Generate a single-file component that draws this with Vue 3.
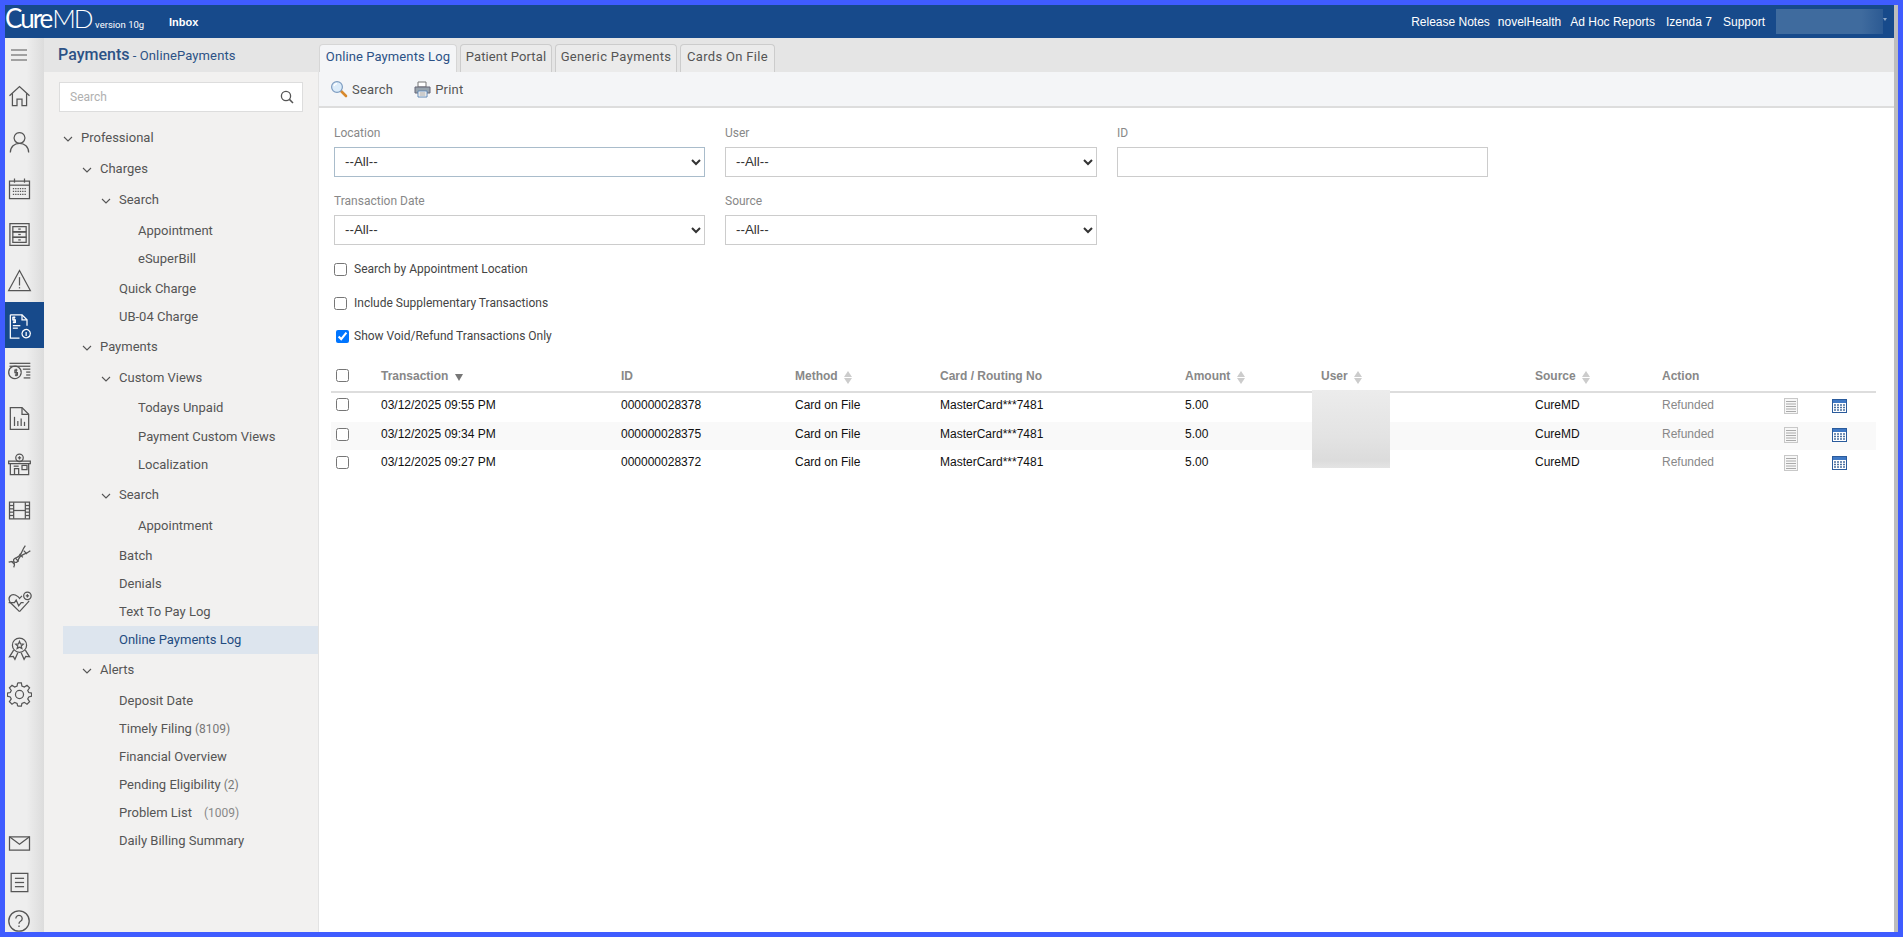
<script setup>
const railIcons = [
  { id: 'home', paths: ['M3 14 L15 3 L27 14', 'M6.500 11 V26 H12 V18 H18 V26 H23.500 V11'] },
  { id: 'user', paths: ['M15 3 a6.500 6.500 0 1 0 0.01 0', 'M4 27 c0 -7 5 -11 11 -11 s11 4 11 11'] },
  { id: 'calendar', paths: ['M3 6 H27 V27 H3 Z', 'M3 11 H27', 'M9 3 V8', 'M21 3 V8', 'M7 15 H23', 'M7 18.500 H23', 'M7 22 H23'], dashed: [4, 5, 6] },
  { id: 'cabinet', paths: ['M3.500 2 H26.500 V28 H3.500 Z', 'M7 5.500 H23 V11.500 H7 Z', 'M7 12 H23 V18 H7 Z', 'M7 18.500 H23 V24.500 H7 Z', 'M13.500 8.500 H16.500', 'M13.500 15 H16.500', 'M13.500 21.500 H16.500'] },
  { id: 'alert', paths: ['M15 3 L28 27 H2 Z', 'M15 11 V21', 'M15 23 V24.500'] },
  { id: 'billing', active: true, paths: ['M4 1 H18 L24 7 V14', 'M4 1 V29 H15', 'M18 1 V7 H24', 'M10 4 H7 V7 H10 V10 H7', 'M8.500 3 V11', 'M7 14 H16', 'M7 17 H13', 'M28 24 a5 5 0 1 0 -0.010 0.100', 'M23 21.500 V26.500'] },
  { id: 'money', paths: ['M3 4 H28', 'M3 7.500 H28', 'M19 11 H28', 'M23 14.500 H28', 'M23 18 H28', 'M20 21.500 H28', 'M17 15.500 a7.500 7.500 0 1 0 -0.010 0.100', 'M12.500 12 h-3 v3 h3 v3 h-3', 'M11 10.500 V19.500'] },
  { id: 'report', paths: ['M4 2 H18 L26 10 V28 H4 Z', 'M18 2 V10 H26', 'M9 24 V13', 'M13 24 V18', 'M17 24 V15', 'M21 24 V19'] },
  { id: 'clinic', paths: ['M2 11 H28 V14 H2 Z', 'M4 14 V27 H26 V14', 'M9 27 V20 H14 V27', 'M8 17 H14', 'M18 16 H24 V21 H18 Z', 'M19.500 7 a4.500 4.500 0 1 0 -9 0 a4.500 4.500 0 1 0 9 0', 'M15 5 V9', 'M13 7 H17'] },
  { id: 'film', paths: ['M3 5 H27 V25 H3 Z', 'M8 5 V25', 'M22 5 V25', 'M8 15 H22', 'M3 9 H8', 'M3 13 H8', 'M3 17 H8', 'M3 21 H8', 'M22 9 H27', 'M22 13 H27', 'M22 17 H27', 'M22 21 H27'] },
  { id: 'dna', paths: ['M2 22 C8 18 11 27 14 18 C16 12 20 14 28 8', 'M8 28 C12 22 3 19 12 16 C18 14 16 10 22 2', 'M5 20.500 L9 24.500', 'M10 17 L14 21', 'M15 12 L19 16', 'M20 8 L24 12'] },
  { id: 'heart', box: '0 1 30 30', paths: ['M15 27 L4 16 C0 10 5 5 10 7 C12 8 14 9 15 11 C16 10 17 9 18 8', 'M15 27 L24 17 C25 16 26 15 26.500 14', 'M2 16 H9 L11 13 L14 20 L17 16 H20', 'M29 8 a4.500 4.500 0 1 0 -9 0 a4.500 4.500 0 1 0 9 0', 'M24.500 6 V10', 'M22.500 8 H26.500'] },
  { id: 'award', paths: ['M23.500 11 a8.500 8.500 0 1 0 -17 0 a8.500 8.500 0 1 0 17 0', 'M15 6.500 L16.300 9.500 L19.500 9.800 L17 12 L17.800 15 L15 13.400 L12.200 15 L13 12 L10.500 9.800 L13.700 9.500 Z', 'M8 17 L3 25 L7.500 24.500 L9.500 28 L13 20', 'M22 17 L27 25 L22.500 24.500 L20.500 28 L17 20'] },
  { id: 'gear', box: '0 2 30 31', paths: ['M12.700 3 H17.300 L18 7 L21 8.300 L24.300 6 L27.500 9.200 L25.200 12.500 L26.500 15 L30 15.800 V19.500 L26.500 20.500 L25.200 23 L27.500 26.300 L24.300 29.500 L21 27.200 L18 28.500 L17.300 32 H12.700', 'M12.700 3 L12 7 L9 8.300 L5.700 6 L2.500 9.200 L4.800 12.500 L3.500 15 L0 15.800 V19.500 L3.500 20.500 L4.800 23 L2.500 26.300 L5.700 29.500 L9 27.200 L12 28.500 L12.700 32', 'M20 17.500 a5 5 0 1 0 -10 0 a5 5 0 1 0 10 0'] },
];
const bottomIcons = [
  { id: 'mail', paths: ['M3 7 H27 V23 H3 Z', 'M3 7 L15 16 L27 7'] },
  { id: 'list', paths: ['M5 4 H25 V26 H5 Z', 'M9.500 10 H20.500', 'M9.500 15 H20.500', 'M9.500 20 H20.500'] },
];
const tree = [
  { label: 'Professional', depth: 0, open: true, gap: 0 },
  { label: 'Charges', depth: 1, open: true, gap: 3 },
  { label: 'Search', depth: 2, open: true, gap: 3 },
  { label: 'Appointment', depth: 3, gap: 3 },
  { label: 'eSuperBill', depth: 3, gap: 0 },
  { label: 'Quick Charge', depth: 2, gap: 2 },
  { label: 'UB-04 Charge', depth: 2, gap: 0 },
  { label: 'Payments', depth: 1, open: true, gap: 2 },
  { label: 'Custom Views', depth: 2, open: true, gap: 3 },
  { label: 'Todays Unpaid', depth: 3, gap: 2 },
  { label: 'Payment Custom Views', depth: 3, gap: 1 },
  { label: 'Localization', depth: 3, gap: 0 },
  { label: 'Search', depth: 2, open: true, gap: 2 },
  { label: 'Appointment', depth: 3, gap: 3 },
  { label: 'Batch', depth: 2, gap: 2 },
  { label: 'Denials', depth: 2, gap: 0 },
  { label: 'Text To Pay Log', depth: 2, gap: 0 },
  { label: 'Online Payments Log', depth: 2, gap: 0, active: true },
  { label: 'Alerts', depth: 1, open: true, gap: 2 },
  { label: 'Deposit Date', depth: 2, gap: 3 },
  { label: 'Timely Filing', depth: 2, gap: 0, count: '(8109)' },
  { label: 'Financial Overview', depth: 2, gap: 0 },
  { label: 'Pending Eligibility', depth: 2, gap: 0, count: '(2)' },
  { label: 'Problem List', depth: 2, gap: 0, count: '(1009)', wide: true },
  { label: 'Daily Billing Summary', depth: 2, gap: 0 },
];
const topLinks = ['Release Notes', 'novelHealth', 'Ad Hoc Reports', 'Izenda 7', 'Support'];
const tabs = ['Online Payments Log', 'Patient Portal', 'Generic Payments', 'Cards On File'];
const columns = [
  { label: 'Transaction', sort: 'desc' },
  { label: 'ID' },
  { label: 'Method', sort: 'both' },
  { label: 'Card / Routing No', sort: 'none' },
  { label: 'Amount', sort: 'both' },
  { label: 'User', sort: 'both' },
  { label: 'Source', sort: 'both' },
  { label: 'Action' },
];
const rows = [
  { time: '03/12/2025 09:55 PM', id: '000000028378' },
  { time: '03/12/2025 09:34 PM', id: '000000028375' },
  { time: '03/12/2025 09:27 PM', id: '000000028372' },
];
</script>

<template>
  <div class="frame">
    <div class="main">
      <header class="topbar">
        <div class="logo">
          <span class="logo-cure">Cure</span><span class="logo-md">MD</span><span class="logo-ver">version 10g</span>
        </div>
        <a class="inbox">Inbox</a>
        <nav class="toplinks">
          <a v-for="l in topLinks" :key="l">{{ l }}</a>
        </nav>
        <div class="user-blur"></div>
        <span class="user-caret"></span>
      </header>

      <div class="body">
        <aside class="rail">
          <div class="rail-menu">
            <svg width="16" height="12" viewBox="0 0 16 12"><path d="M0 1 H16 M0 6 H16 M0 11 H16" stroke="#555" stroke-width="1.100" fill="none" /></svg>
          </div>
          <div v-for="ic in railIcons" :key="ic.id" class="rail-item" :class="{ on: ic.active }">
            <svg width="25" height="25" :viewBox="ic.box || '0 0 30 30'" fill="none" stroke-width="1.500">
              <path
                v-for="(d, i) in ic.paths"
                :key="i"
                :d="d"
                :stroke-dasharray="ic.dashed && ic.dashed.includes(i) ? '1.600 1.200' : null"
              />
            </svg>
          </div>
          <div class="rail-bottom">
            <div v-for="ic in bottomIcons" :key="ic.id" class="rail-small">
              <svg width="25" height="25" viewBox="0 0 30 30" fill="none" stroke-width="1.500">
                <path v-for="(d, i) in ic.paths" :key="i" :d="d" />
              </svg>
            </div>
            <div class="rail-help">
              <svg width="22" height="22" viewBox="0 0 22 22" fill="none" stroke-width="1.300">
                <circle cx="11" cy="11" r="10.200" />
                <path d="M7.800 8.500 a3.200 3.200 0 1 1 4.800 2.800 c-1 .6 -1.600 1.100 -1.600 2.400" />
                <path d="M11 15.500 V17" />
              </svg>
            </div>
          </div>
        </aside>

        <div class="workspace">
          <div class="heading-strip">
            <div class="page-title"><b>Payments</b> <span>- OnlinePayments</span></div>
            <div class="tabs">
              <div v-for="(t, i) in tabs" :key="t" class="tab" :class="{ active: i === 0 }">{{ t }}</div>
            </div>
          </div>

          <div class="columns">
            <aside class="tree-panel">
              <div class="tree-search">
                <input class="tree-input" type="text" placeholder="Search" />
                <svg width="14" height="14" viewBox="0 0 14 14" fill="none"><circle cx="6" cy="6" r="4.600" stroke="#555" stroke-width="1.300" /><path d="M9.400 9.400 L13 13" stroke="#555" stroke-width="1.500" /></svg>
              </div>
              <ul class="tree">
                <li
                  v-for="(n, i) in tree"
                  :key="i"
                  class="node"
                  :class="['d' + n.depth, 'g' + n.gap, { active: n.active }]"
                >
                  <svg v-if="n.open" class="chev" width="10" height="6" viewBox="0 0 10 6"><path d="M1 1 L5 5 L9 1" fill="none" stroke="#555" stroke-width="1.100" /></svg>
                  <span>{{ n.label }}</span>
                  <span v-if="n.count" class="count" :class="{ wide: n.wide }">{{ n.count }}</span>
                </li>
              </ul>
            </aside>

            <main class="content">
              <div class="toolbar">
                <a class="tool">
                  <svg width="18" height="18" viewBox="0 0 18 18">
                    <path d="M10.500 10.500 L16 16" stroke="#d8892c" stroke-width="2.600" stroke-linecap="round" />
                    <circle cx="7" cy="7" r="5.400" fill="#dcecfa" stroke="#7d9cc0" stroke-width="1.200" />
                    <path d="M4 6 a3.500 3.500 0 0 1 3 -2.500" stroke="#fff" stroke-width="1.300" fill="none" />
                  </svg>
                  Search
                </a>
                <a class="tool">
                  <svg width="17" height="17" viewBox="0 0 17 17">
                    <path d="M4 1 H12 V6 H4 Z" fill="#fff" stroke="#777" />
                    <path d="M1 6 H16 V12 H1 Z" fill="#97a3ad" stroke="#667" />
                    <path d="M4 10 H13 V16 H4 Z" fill="#fff" stroke="#5f86b3" />
                    <path d="M5.500 12 H11.500 M5.500 14 H11.500" stroke="#999" />
                  </svg>
                  Print
                </a>
              </div>

              <form class="filters" @submit.prevent>
                <div class="filter-grid">
                  <label class="field">
                    <span>Location</span>
                    <select class="control focus"><option>--All--</option></select>
                  </label>
                  <label class="field">
                    <span>User</span>
                    <select class="control"><option>--All--</option></select>
                  </label>
                  <label class="field">
                    <span>ID</span>
                    <input class="control" type="text" />
                  </label>
                  <label class="field">
                    <span>Transaction Date</span>
                    <select class="control"><option>--All--</option></select>
                  </label>
                  <label class="field">
                    <span>Source</span>
                    <select class="control"><option>--All--</option></select>
                  </label>
                </div>
                <label class="check first"><input type="checkbox" /> Search by Appointment Location</label>
                <label class="check"><input type="checkbox" /> Include Supplementary Transactions</label>
                <label class="check shifted"><input type="checkbox" checked /> Show Void/Refund Transactions Only</label>
              </form>

              <div class="table-wrap">
                <table class="grid">
                  <colgroup>
                    <col class="c-check" /><col class="c-tx" /><col class="c-id" /><col class="c-method" /><col class="c-card" /><col class="c-amount" /><col class="c-user" /><col class="c-source" /><col class="c-action" /><col class="c-note" /><col class="c-cal" />
                  </colgroup>
                  <thead>
                    <tr>
                      <th class="cell-check"><input type="checkbox" /></th>
                      <th v-for="c in columns" :key="c.label">
                        {{ c.label }}
                        <span v-if="c.sort === 'desc'" class="sort-desc"></span>
                        <span v-if="c.sort === 'both'" class="sort-both"></span>
                      </th>
                      <th></th>
                      <th></th>
                    </tr>
                  </thead>
                  <tbody>
                    <tr v-for="r in rows" :key="r.id">
                      <td class="cell-check"><input type="checkbox" /></td>
                      <td>{{ r.time }}</td>
                      <td>{{ r.id }}</td>
                      <td>Card on File</td>
                      <td>MasterCard***7481</td>
                      <td>5.00</td>
                      <td></td>
                      <td>CureMD</td>
                      <td class="muted">Refunded</td>
                      <td class="cell-icon">
                        <svg class="row-icon" width="14" height="16" viewBox="0 0 14 16">
                          <rect x=".5" y=".5" width="13" height="15" fill="#f7f7f7" stroke="#c8c8c8" />
                          <path d="M2 3.500 H12 M2 6 H12 M2 8.500 H12 M2 11 H12 M2 13.500 H12" stroke="#aaa" />
                        </svg>
                      </td>
                      <td class="cell-icon">
                        <svg class="row-icon" width="15" height="14" viewBox="0 0 15 14">
                          <rect x=".5" y=".5" width="14" height="13" fill="#fff" stroke="#2a5b9c" />
                          <rect x="1" y="1" width="13" height="3" fill="#3f78c4" />
                          <path d="M2 6 H13 M2 8.500 H13 M2 11 H13" stroke="#4a6f9f" stroke-dasharray="2 1" stroke-width="1.300" />
                        </svg>
                      </td>
                    </tr>
                  </tbody>
                </table>
                <div class="blur-user"></div>
              </div>
            </main>
          </div>
        </div>
      </div>
    </div>
    <div class="edge"></div>
  </div>
</template>

<style>
html, body { margin: 0; height: 100%; overflow: hidden; }
</style>

<style scoped>
* { box-sizing: border-box; }
.frame {
  width: 1903px; height: 937px; border: 5px solid #3f5cff; background: #fff;
  display: flex; overflow: hidden;
  font-family: "Liberation Sans", Arial, sans-serif; font-size: 12px; color: #111;
}
.main { flex: 1; min-width: 0; display: flex; flex-direction: column; }
.topbar {
  height: 33px; flex: none; background: #174a8b; color: #fff;
  display: flex; align-items: center; position: relative;
}
.logo { width: 164px; display: flex; align-items: baseline; font-family: Lato, "Open Sans", sans-serif; line-height: 31px; flex: none; white-space: nowrap; }
.logo-cure { font-size: 26px; font-weight: 400; letter-spacing: -2px; }
.logo-md { font-size: 26px; font-weight: 300; letter-spacing: -2.300px; margin-left: 1px; }
.logo-ver { font-family: Roboto, sans-serif; font-size: 9.500px; margin-left: 4px; }
.inbox { font-weight: 700; font-size: 11px; }
.toplinks { margin-left: auto; display: flex; gap: 8px; font-size: 12px; margin-right: 11px; white-space: nowrap; }
.toplinks a:nth-child(3) { margin-left: 1px; }
.toplinks a:nth-child(4), .toplinks a:nth-child(5) { margin-left: 3px; }
.user-blur { width: 107px; height: 25px; background: linear-gradient(90deg, #3f6b9e, #3f6b9e 80%, #2c5a93); flex: none; }
.user-caret { width: 4px; height: 3px; flex: none; border-left: 2px solid transparent; border-right: 2px solid transparent; border-top: 3px solid #8ea8c8; margin: -4px 7px 0 0; }

.body { flex: 1; min-height: 0; display: flex; }
.rail {
  width: 39px; flex: none; display: flex; flex-direction: column;
  background: linear-gradient(90deg, #eeeeee 55%, #dcdcdc);
}
.rail-menu { height: 34px; flex: none; display: flex; align-items: center; justify-content: center; padding-right: 11px; }
.rail-item { height: 46px; flex: none; display: flex; align-items: center; justify-content: center; padding: 2px 11px 0 0; }
.rail-item svg, .rail-small svg, .rail-help svg { stroke: #555; display: block; }
.rail-item.on { background: #174a8b; }
.rail-item.on svg { stroke: #fff; }
.rail-bottom { margin-top: auto; }
.rail-small { height: 39px; display: flex; align-items: center; justify-content: center; padding-right: 11px; }
.rail-help { height: 30px; padding: 8px 0 0 3px; }

.workspace { flex: 1; min-width: 0; display: flex; flex-direction: column; }
.heading-strip { height: 34px; flex: none; background: #e5e5e5; display: flex; }
.page-title { width: 275px; flex: none; padding: 7px 0 0 14px; font-family: Roboto, sans-serif; color: #2c5286; font-size: 13px; line-height: 20px; white-space: nowrap; }
.page-title b { font-size: 16px; font-weight: 500; }
.page-title span { letter-spacing: .12px; }
.tabs { display: flex; gap: 3px; align-items: flex-end; font-family: Roboto, sans-serif; font-size: 13px; color: #555; }
.tab { height: 28px; line-height: 24px; text-align: center; border: 1px solid #ccc; border-bottom: 0; border-radius: 4px 4px 0 0; background: #ebebeb; white-space: nowrap; letter-spacing: .1px; }
.tab:nth-child(1) { width: 138px; }
.tab:nth-child(2) { width: 92px; }
.tab:nth-child(3) { width: 122px; letter-spacing: .35px; }
.tab:nth-child(4) { width: 95px; letter-spacing: .33px; }
.tab.active { background: #f4f5f7; color: #2c5286; border-color: #d6d6d6; }

.columns { flex: 1; min-height: 0; display: flex; }
.tree-panel { width: 275px; flex: none; background: #f2f1f0; border-right: 1px solid #e3e3e3; padding: 10px 0 0 0; font-family: Roboto, sans-serif; font-size: 13px; color: #555; }
.tree-search { margin-left: 15px; width: 244px; height: 30px; background: #fff; border: 1px solid #ddd; display: flex; align-items: center; padding: 0 8px 0 10px; }
.tree-input { flex: 1; min-width: 0; border: 0; outline: 0; background: none; font: 12px Roboto, sans-serif; padding: 0; }
.tree-input::placeholder { color: #b0b0b0; }
.tree { list-style: none; margin: 12px 0 0; padding: 0 0 0 19px; }
.node { height: 28px; line-height: 28px; position: relative; white-space: nowrap; }
.d0 { padding-left: 18px; }
.d1 { padding-left: 37px; }
.d2 { padding-left: 56px; }
.d3 { padding-left: 75px; }
.g1 { margin-top: 1px; }
.g2 { margin-top: 2px; }
.g3 { margin-top: 3px; }
.chev { position: absolute; top: 12px; }
.d0 .chev { left: 0; }
.d1 .chev { left: 19px; }
.d2 .chev { left: 38px; }
.node.active { background: #dde5ee; color: #1f4b80; }
.count { font-size: 12px; margin-left: 3px; color: #777; }
.count.wide { margin-left: 12px; color: #888; }

.content { flex: 1; min-width: 0; position: relative; }
.toolbar { height: 36px; background: #f4f5f7; border-bottom: 2px solid #ddd; display: flex; align-items: center; padding-left: 11px; gap: 21px; font-family: Roboto, sans-serif; font-size: 13px; color: #555; letter-spacing: .2px; }
.tool { display: flex; align-items: center; gap: 4px; }
.filters { padding: 15px 0 0 15px; }
.filter-grid { display: grid; grid-template-columns: 371px 372px 371px; column-gap: 20px; }
.field { display: flex; flex-direction: column; height: 68px; font-family: Roboto, sans-serif; font-size: 12px; color: #888; }
.field span { height: 24px; line-height: 20px; }
.control { height: 30px; width: 100%; background: #fff; border: 1px solid #ccc; border-radius: 0; padding: 0 6px; font: 13.330px "Liberation Sans", Arial, sans-serif; color: #333; }
select.control { padding: 0 0 2px 6px; }
.control.focus { border-color: #a9bccb; }
.check { display: flex; align-items: center; height: 20px; margin-top: 14px; font-family: Roboto, sans-serif; font-size: 12px; color: #444; }
.check.first { margin-top: 0; }
.check input { width: 13px; height: 13px; margin: 0 7px 0 0; flex: none; }
.check.shifted { padding-left: 2px; margin-top: 13px; }
.check.shifted input { margin-right: 5px; }
.table-wrap { position: relative; margin: 14px 18px 0 12px; }
.grid { width: 100%; table-layout: fixed; border-collapse: collapse; }
.c-check { width: 44px; } .c-tx { width: 240px; } .c-id { width: 174px; } .c-method { width: 145px; }
.c-card { width: 245px; } .c-amount { width: 136px; } .c-user { width: 214px; } .c-source { width: 127px; }
.c-action { width: 122px; } .c-note { width: 48px; } .c-cal { width: 50px; }
.grid th { height: 32px; text-align: left; font-weight: 700; color: #888; font-size: 12px; padding: 0 0 0 6px; border-bottom: 2px solid #ddd; white-space: nowrap; }
.grid td { height: 28px; padding: 0 0 4px 6px; font-size: 12px; color: #111; white-space: nowrap; }
.grid tbody tr:first-child td { height: 30px; padding-bottom: 6px; }
.grid tbody tr:nth-child(2) { background: #f9f9f9; }
.grid .cell-check { padding-left: 5px; }
.grid td.cell-icon { padding-bottom: 2px; }
.grid tbody tr:first-child td.cell-icon { padding-bottom: 4px; }
.cell-check input { display: block; margin: 0; width: 13px; height: 13px; }
.muted { color: #888 !important; }
.row-icon { display: block; }
.sort-desc { display: inline-block; width: 0; height: 0; border-left: 4px solid transparent; border-right: 4px solid transparent; border-top: 7px solid #777; margin-left: 3px; vertical-align: -1px; }
.sort-both { display: inline-block; width: 0; height: 0; border-left: 4px solid transparent; border-right: 4px solid transparent; border-bottom: 6px solid #ccc; margin-left: 3px; position: relative; vertical-align: 3px; }
.sort-both::after { content: ""; position: absolute; left: -4px; top: 7px; border-left: 4px solid transparent; border-right: 4px solid transparent; border-top: 6px solid #ccc; }
.blur-user { position: absolute; left: 981px; top: 30px; width: 78px; height: 78px; background: linear-gradient(180deg, #ececec, #e3e3e3 60%, #dcdcdc 90%, #e4e4e4); }
.edge { width: 4px; flex: none; background: #bdbdbd; }
</style>
